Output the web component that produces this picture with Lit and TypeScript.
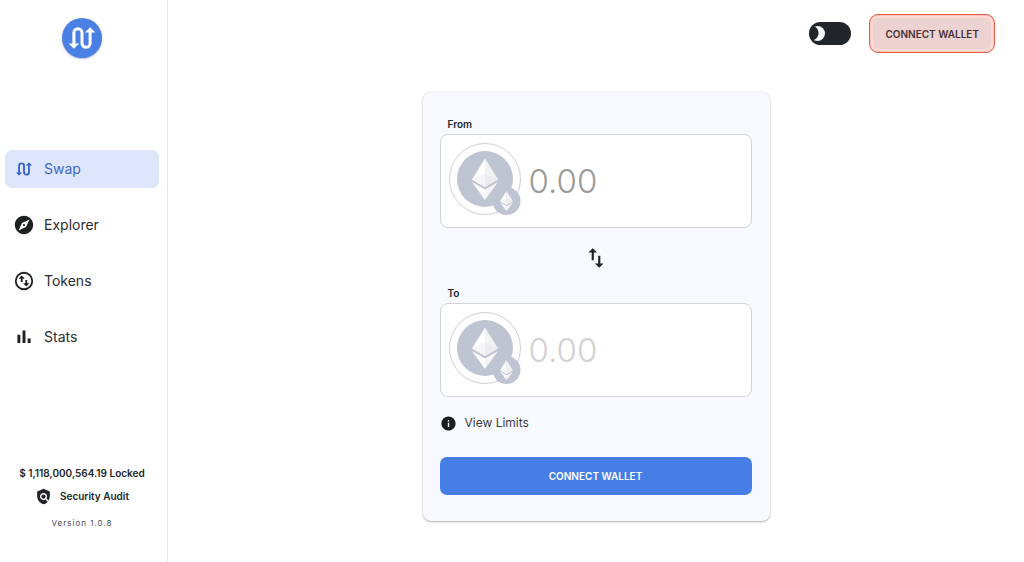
import { LitElement, html, css, svg } from "lit";
import { customElement, property, state } from "lit/decorators.js";

const INFO = "M12 2C6.48 2 2 6.48 2 12s4.48 10 10 10 10-4.48 10-10S17.52 2 12 2zm1 15h-2v-6h2v6zm0-8h-2V7h2v2z";
const EXPLORE = "M12 10.9c-.61 0-1.1.49-1.1 1.1s.49 1.1 1.1 1.1c.61 0 1.1-.49 1.1-1.1s-.49-1.1-1.1-1.1zM12 2C6.48 2 2 6.48 2 12s4.48 10 10 10 10-4.48 10-10S17.52 2 12 2zm2.19 12.19L6 18l3.81-8.19L18 6l-3.81 8.19z";
const SWAP_VERT = "M16 17.01V10h-2v7.01h-3L15 21l4-3.99h-3zM9 3 5 6.99h3V14h2V6.99h3L9 3z";
const POLICY = "M21 5l-9-4-9 4v6c0 5.55 3.84 10.74 9 12 2.3-.56 4.33-1.9 5.88-3.71l-3.12-3.12c-1.94 1.29-4.58 1.07-6.29-.64-1.95-1.95-1.95-5.12 0-7.07 1.95-1.95 5.12-1.95 7.07 0 1.71 1.71 1.92 4.35.64 6.29l2.9 2.9C20.29 15.69 21 13.38 21 11V5z";

const route = svg`
  <path d="M6.600 16.500V8.500a2.700 2.700 0 0 1 5.400 0v7a2.700 2.700 0 0 0 5.400 0V7.500" fill="none" stroke="currentColor" stroke-width="2"/>
  <path d="M3.100 15.700h7L6.600 19.200z M13.900 8.300h7L17.400 4.800z" fill="currentColor"/>`;

const glyphs = {
  swap: route,
  explorer: svg`<path d=${EXPLORE} fill="currentColor"/>`,
  tokens: svg`
    <circle cx="12" cy="12" r="9" fill="none" stroke="currentColor" stroke-width="2"/>
    <path d="M6 9.500 9.500 6 13 9.500h-2.500v3.500h-2V9.500z M18 14.500l-3.500 3.500-3.500-3.500h2.500v-3.500h2v3.500z" fill="currentColor"/>`,
  stats: svg`<path d="M4.800 9.500h3.2v9H4.800z M10.4 5h3.2v13.500h-3.2z M16 13.500h3.2v5H16z" fill="currentColor"/>`,
};

type Glyph = keyof typeof glyphs;

const links: { id: Glyph; label: string }[] = [
  { id: "swap", label: "Swap" },
  { id: "explorer", label: "Explorer" },
  { id: "tokens", label: "Tokens" },
  { id: "stats", label: "Stats" },
];

const diamond = svg`
  <path d="M0-20.500V8L-13 0.500z" fill="#fdfdfd"/>
  <path d="M0-20.500V8L13 0.500z" fill="#f3f3f5"/>
  <path d="M0-5.500V8L-13 0.500z" fill="#f5f5f7"/>
  <path d="M0-5.500V8L13 0.500z" fill="#ececef"/>
  <path d="M-13 3 0 10.500V21z" fill="#fdfdfd"/>
  <path d="M13 3 0 10.500V21z" fill="#f5f5f7"/>`;

/** One side of the exchange: a token badge beside an amount field. */
@customElement("amount-box")
export class AmountBox extends LitElement {
  @property() label = "";
  @property({ type: Boolean }) output = false;

  static styles = css`
    :host {
      display: block;
    }
    label {
      display: block;
      padding: 0 8px;
      font-size: 10px;
      line-height: 20px;
      font-weight: 600;
      color: #212529;
    }
    .box {
      display: flex;
      align-items: center;
      gap: 8px;
      box-sizing: border-box;
      padding: 8px;
      background: #fff;
      border: 1px solid #d3d4da;
      border-radius: 8px;
    }
    .token {
      flex: none;
      padding: 0;
      border: 0;
      background: none;
      cursor: pointer;
    }
    .token svg {
      display: block;
      width: 72px;
      height: 76px;
    }
    input {
      flex: 1;
      min-width: 0;
      padding: 0;
      border: 0;
      outline: 0;
      background: none;
      font-family: inherit;
      font-size: 33px;
      line-height: 44px;
      font-weight: 300;
      color: #212529;
    }
    input::placeholder {
      color: #9a9a9a;
      opacity: 1;
    }
    input.output::placeholder {
      color: #d2d2d2;
    }
  `;

  render() {
    return html`
      <label for="amount">${this.label}</label>
      <div class="box">
        <button class="token" type="button" aria-label="Choose token and network">
          <svg viewBox="0 0 72 76" aria-hidden="true">
            <circle cx="36" cy="36" r="35.500" fill="#fff" stroke="#cfcfd2"/>
            <circle cx="36" cy="36" r="28" fill="#bec4d1"/>
            <g transform="translate(36 36)">${diamond}</g>
            <circle cx="57.500" cy="58" r="14" fill="#bec4d1"/>
            <g transform="translate(57.500 58) scale(.49)">${diamond}</g>
          </svg>
        </button>
        <input id="amount" class=${this.output ? "output" : ""} inputmode="decimal"
          placeholder="0.00" ?readonly=${this.output} />
      </div>
    `;
  }
}

@customElement("app-root")
export class AppRoot extends LitElement {
  @state() private page: Glyph = "swap";

  static styles = css`
    :host {
      display: grid;
      grid-template-columns: 168px 1fr;
      min-height: 100vh;
      background: #fff;
      color: #212529;
      font-family: Inter, "Liberation Sans", sans-serif;
    }
    button {
      font-family: inherit;
      cursor: pointer;
    }
    svg {
      display: block;
      flex: none;
    }
    .side {
      display: flex;
      flex-direction: column;
      box-sizing: border-box;
      border-right: 1px solid #e9e9eb;
      padding: 18px 8px 33px 5px;
    }
    .logo {
      align-self: center;
      display: grid;
      place-items: center;
      width: 40px;
      height: 40px;
      border-radius: 50%;
      background: #4a80e4;
      color: #fff;
      box-shadow: 0 1px 2px rgba(40, 60, 110, 0.35);
    }
    .logo svg {
      width: 36px;
      height: 36px;
    }
    nav {
      display: flex;
      flex-direction: column;
      gap: 18px;
      margin-top: 92px;
    }
    nav a {
      display: flex;
      align-items: center;
      gap: 9px;
      height: 38px;
      padding: 0 8px;
      border-radius: 7px;
      font-size: 14px;
      line-height: 20px;
      color: #2b2c30;
      text-decoration: none;
    }
    nav svg {
      width: 22px;
      height: 22px;
      color: #1f2023;
    }
    nav a.active {
      background: #dde6fb;
      color: #3d66c8;
    }
    nav a.active svg {
      color: #3662d0;
    }
    .foot {
      display: flex;
      flex-direction: column;
      align-items: center;
      margin-top: auto;
      font-size: 10px;
      line-height: 23px;
      font-weight: 600;
    }
    .audit {
      display: flex;
      align-items: center;
      gap: 8px;
      color: inherit;
      text-decoration: none;
    }
    .audit svg {
      width: 17px;
      height: 17px;
    }
    .version {
      padding-top: 9px;
      font-size: 8px;
      line-height: 12px;
      font-weight: 400;
      letter-spacing: 1px;
      color: #44454a;
    }
    .main {
      display: flex;
      flex-direction: column;
    }
    header {
      display: flex;
      justify-content: flex-end;
      align-items: center;
      gap: 18px;
      padding: 14px 29px 0 0;
    }
    .theme {
      display: flex;
      cursor: pointer;
    }
    .theme input {
      appearance: none;
      width: 42px;
      height: 23px;
      margin: 0;
      border-radius: 12px;
      background: #212529;
      cursor: pointer;
      display: flex;
      align-items: center;
    }
    .theme input::before {
      content: "";
      width: 15px;
      height: 15px;
      margin-left: 1px;
      border-radius: 50%;
      background: radial-gradient(circle at 1px 7px, #212529 7px, #f4f6fb 8px);
    }
    .theme input:checked {
      justify-content: flex-end;
    }
    .callout {
      padding: 3px;
      border: 1px solid #e4604c;
      border-radius: 9px;
      background: #fddcd7;
      box-shadow: 0 0 0 1px #f9c4bc inset;
    }
    .callout button {
      display: block;
      height: 31px;
      padding: 0 12px;
      border: 0;
      border-radius: 6px;
      background: #ecd2d0;
      font-size: 10px;
      font-weight: 600;
      color: #4a3033;
    }
    .card {
      display: flex;
      flex-direction: column;
      box-sizing: border-box;
      width: 100%;
      max-width: 347px;
      margin: 39px auto;
      padding: 22px 18px 26px 17px;
      border-radius: 8px;
      background: #f8f9fe;
      box-shadow: 0 1px 2px rgba(0, 0, 0, 0.3), 0 0 2px rgba(0, 0, 0, 0.08);
    }
    .flip {
      align-self: center;
      margin: 17px 0 12px;
      padding: 0;
      border: 0;
      background: none;
      color: #212529;
    }
    .flip svg {
      width: 26px;
      height: 26px;
    }
    .limits {
      align-self: flex-start;
      display: flex;
      align-items: center;
      gap: 8px;
      margin: 16px 0 24px;
      padding: 0;
      border: 0;
      background: none;
      font-size: 12px;
      line-height: 20px;
      color: #3a3b40;
    }
    .limits svg {
      width: 17px;
      height: 17px;
      color: #1c1d20;
    }
    .connect {
      height: 38px;
      border: 0;
      border-radius: 7px;
      background: #467ee5;
      color: #fff;
      font-size: 10px;
      font-weight: 600;
    }
  `;

  private go(e: Event, id: Glyph) {
    e.preventDefault();
    this.page = id;
  }

  render() {
    return html`
      <aside class="side">
        <div class="logo"><svg viewBox="0 0 24 24" aria-hidden="true">${route}</svg></div>
        <nav aria-label="Main">
          ${links.map(
            (l) => html`<a href="#${l.id}" class=${l.id === this.page ? "active" : ""}
              @click=${(e: Event) => this.go(e, l.id)}
              ><svg viewBox="0 0 24 24" aria-hidden="true">${glyphs[l.id]}</svg>${l.label}</a>`
          )}
        </nav>
        <div class="foot">
          <div>$ 1,118,000,564.19 Locked</div>
          <a class="audit" href="#audit">
            <svg viewBox="0 0 24 24" fill="currentColor" aria-hidden="true">
              <path d=${POLICY} /><circle cx="12" cy="12" r="3" />
            </svg>
            Security Audit
          </a>
          <div class="version">Version 1.0.8</div>
        </div>
      </aside>
      <div class="main">
        <header>
          <label class="theme"><input type="checkbox" role="switch" aria-label="Light theme" /></label>
          <div class="callout"><button type="button">CONNECT WALLET</button></div>
        </header>
        <main class="card">
          <amount-box label="From"></amount-box>
          <button class="flip" type="button" aria-label="Switch direction">
            <svg viewBox="0 0 24 24" fill="currentColor" aria-hidden="true"><path d=${SWAP_VERT} /></svg>
          </button>
          <amount-box label="To" output></amount-box>
          <button class="limits" type="button">
            <svg viewBox="0 0 24 24" fill="currentColor" aria-hidden="true"><path d=${INFO} /></svg>
            View Limits
          </button>
          <button class="connect" type="button">CONNECT WALLET</button>
        </main>
      </div>
    `;
  }
}
